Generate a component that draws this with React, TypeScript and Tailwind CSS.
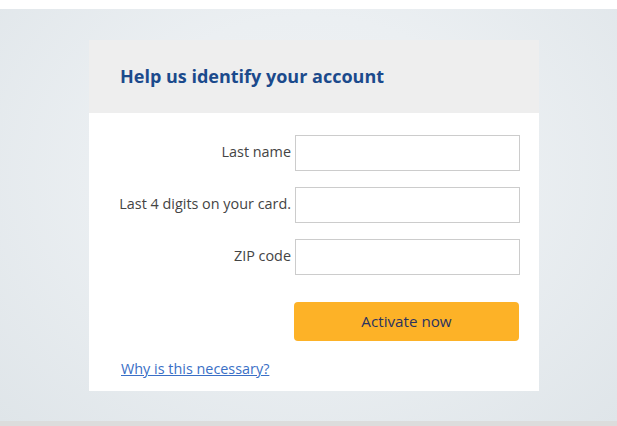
import React from 'react';

const fields = ['Last name', 'Last 4 digits on your card.', 'ZIP code'];

const App: React.FC = () => {
    return (
        <div className="w-[617px] h-[426px] flex flex-col bg-white overflow-hidden" style={{ fontFamily: '"Open Sans", "Noto Sans", sans-serif' }}>
            <div className="h-[9px] bg-white shadow-[0_1px_2px_rgba(0,0,0,0.06)]"></div>

            <div className="h-[412px] flex justify-start pl-[89px] pt-[31px] bg-[radial-gradient(ellipse_at_50%_40%,#eff2f5_0%,#ebeff2_45%,#dfe5e9_100%)]">
                <div className="w-[450px] h-[351px] flex flex-col">
                    <div className="h-[73px] bg-[#eeeeee] flex items-center pl-[31px]">
                        <h1 className="text-[18px] font-bold text-[#1b4a8c] leading-none pb-[1px]">Help us identify your account</h1>
                    </div>

                    <div className="flex-1 bg-white pt-[22px] pr-[19px] flex flex-col">
                        <div className="flex flex-col gap-[16px]">
                            {fields.map((label) => (
                                <div key={label} className="flex items-center justify-end">
                                    <label className="text-[14.4px] text-[#444444] mr-[4px] pb-[2px]">{label}</label>
                                    <input type="text" className="w-[225px] h-[36px] border border-[#cccccc] bg-white outline-none" />
                                </div>
                            ))}
                        </div>

                        <div className="flex justify-end mt-[27px] pr-[1px]">
                            <button className="w-[225px] h-[39px] rounded-[4px] bg-[#fdb227] text-[15.2px] text-[#2b3360]">
                                Activate now
                            </button>
                        </div>

                        <a href="#" className="ml-[32px] mt-[17px] text-[14.4px] text-[#3a6fc6] underline self-start">
                            Why is this necessary?
                        </a>
                    </div>
                </div>
            </div>

            <div className="flex-1 bg-[#dcdcdc]"></div>
        </div>
    );
};

export default App;
